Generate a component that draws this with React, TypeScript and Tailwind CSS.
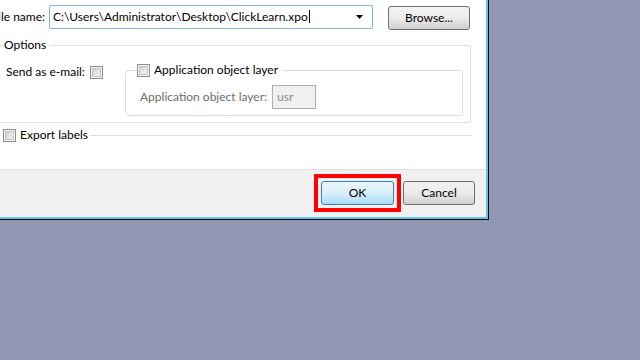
import type { ReactNode } from "react";

const FONT = { fontFamily: 'Lato, "Noto Sans", sans-serif' };

function CheckBox() {
  return (
    <span className="inline-flex h-[13px] w-[13px] shrink-0 items-center justify-center border border-[#8e8f8f] bg-[#f4f4f4] p-[1px]">
      <span className="h-full w-full border border-[#c2c6cb] bg-gradient-to-br from-[#cbcfd5] to-[#f7f7f7]" />
    </span>
  );
}

function WinButton({ children, primary, className }: { children: ReactNode; primary?: boolean; className?: string }) {
  return (
    <div
      className={
        "flex h-[24px] items-center justify-center rounded-[3px] border text-[12px] text-black " +
        (primary
          ? "border-[#3c7fb1] bg-gradient-to-b from-[#eaf6fd] via-[#d9f0fc] to-[#a9dbf6] "
          : "border-[#707070] bg-gradient-to-b from-[#f2f2f2] via-[#ebebeb] to-[#d0d0d0] ") +
        (className ?? "")
      }
    >
      {children}
    </div>
  );
}

export default function App() {
  return (
    <div className="relative h-[360px] w-[640px] overflow-hidden bg-[#9197b2]" style={FONT}>
      <div className="h-[220px] w-[489px] border-b border-r border-black">
        <div className="flex h-full flex-col border-b-2 border-r-2 border-[#5ec6ee] text-[12px] text-black">
          <div className="flex h-[169px] flex-col bg-white">
            <div className="mt-[5px] flex items-center">
              <div className="flex w-[49px] justify-end overflow-hidden whitespace-nowrap pr-[4px]">File name:</div>
              <div className="flex h-[24px] w-[324px] items-center rounded-[2px] border border-[#7fb2dd] pl-[3px] pr-[6px]">
                <span className="flex-1 whitespace-nowrap">
                  C:\Users\Administrator\Desktop\ClickLearn.xpo<span className="ml-px inline-block h-[13px] w-px translate-y-[2px] bg-black" />
                </span>
                <svg width="8" height="5" viewBox="0 0 8 5" className="mr-[2px]">
                  <path d="M0 0H7L3.5 4Z" fill="#000" />
                </svg>
              </div>
              <WinButton className="ml-[15px] w-[82px] translate-y-[1px]">Browse...</WinButton>
            </div>

            <fieldset className="ml-[-4px] mt-[8px] h-[86px] w-[475px] rounded-[3px] border border-[#d5dfe5]">
              <legend className="ml-[7px] w-[46px] leading-[16px]">Options</legend>
              <div className="flex">
                <div className="mt-[11px] flex h-[16px] items-center pl-[9px]">
                  <span className="w-[84px] whitespace-nowrap">Send as e-mail:</span>
                  <CheckBox />
                </div>
                <fieldset className="ml-[22px] mt-[9px] h-[54px] w-[338px] rounded-[4px] border border-[#d5dfe5]">
                  <legend className="ml-[11px] flex items-center gap-[4px] pr-[5px] leading-[16px]">
                    <CheckBox />
                    <span>Application object layer</span>
                  </legend>
                  <div className="mt-[7px] flex items-center pl-[14px]">
                    <span className="w-[130px] whitespace-nowrap text-[#6d6d6d]">Application object layer:</span>
                    <div className="ml-[2px] flex h-[24px] w-[44px] items-center border border-[#abadb3] bg-[#f0f0f0] pl-[4px] text-[#8a8a8a]">
                      usr
                    </div>
                  </div>
                </fieldset>
              </div>
            </fieldset>

            <div className="ml-[3px] mt-[4px] flex w-[468px] items-center">
              <CheckBox />
              <span className="ml-[4px] w-[70px] whitespace-nowrap leading-[16px]">Export labels</span>
              <div className="h-px flex-1 bg-[#d5dfe5]" />
            </div>
          </div>

          <div className="flex flex-1 items-start justify-end border-t border-[#dfdfdf] bg-[#f0f0f0] pr-[11px] pt-[11px]">
            <div className="relative">
              <WinButton primary className="w-[73px]">OK</WinButton>
              <div className="pointer-events-none absolute left-[-7px] right-[-7px] top-[-7px] bottom-[-7px] border-[4px] border-[#ff0000]" />
            </div>
            <WinButton className="ml-[9px] w-[72px]">Cancel</WinButton>
          </div>
        </div>
      </div>
    </div>
  );
}
